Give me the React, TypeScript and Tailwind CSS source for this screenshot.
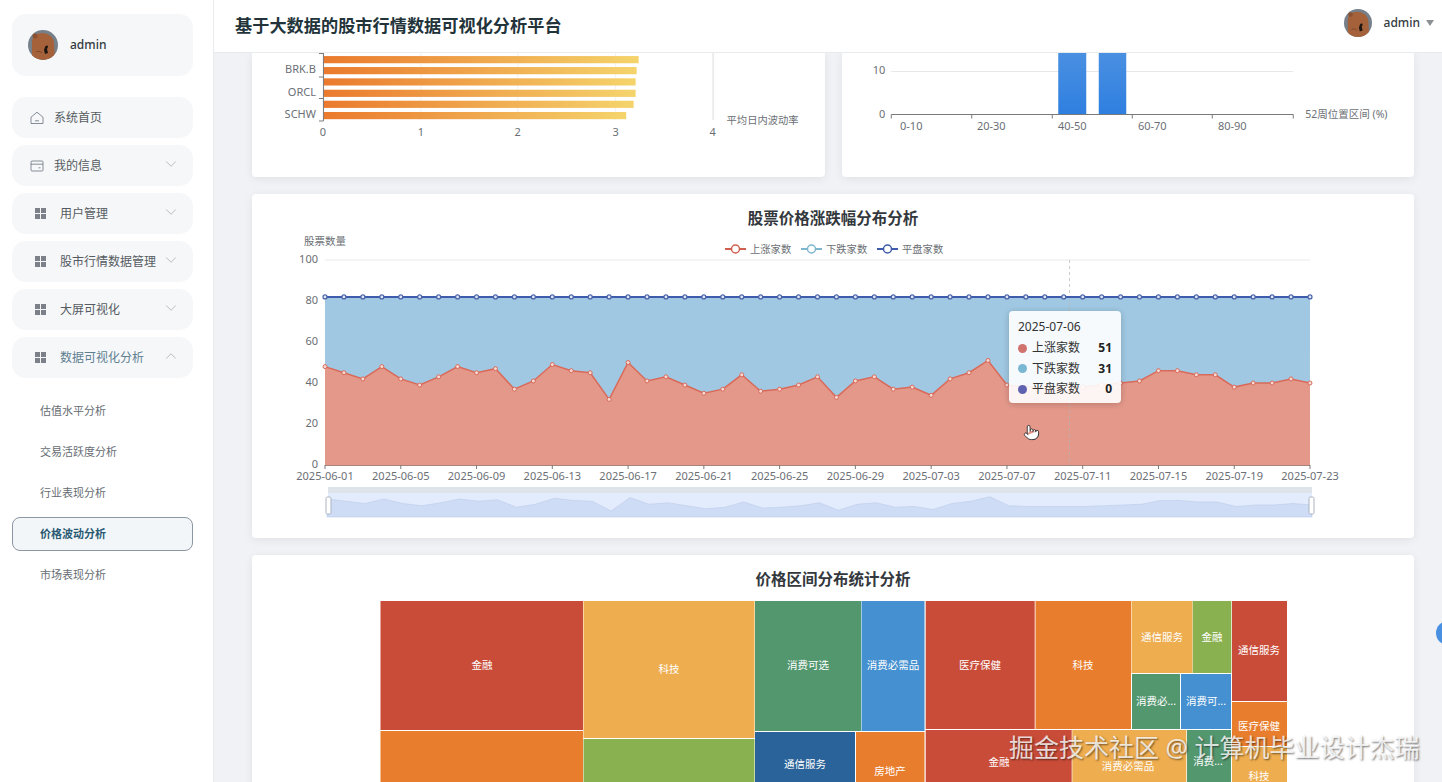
import React from 'react';
import { ChevronDown, ChevronUp, Pointer } from 'lucide-react';

const upCounts = [
  48, 45, 42, 48, 42, 39, 43, 48, 45, 47, 37, 41, 49, 46, 45, 32, 50, 41, 43, 39, 35, 37, 44, 36, 37, 39, 43,
  33, 41, 43, 37, 38, 34, 42, 45, 51, 39, 38, 38, 38, 38, 39, 40, 41, 46, 46, 44, 44, 38, 40, 40, 42, 40,
];
const dateTicks = [
  '2025-06-01', '2025-06-05', '2025-06-09', '2025-06-13', '2025-06-17', '2025-06-21', '2025-06-25',
  '2025-06-29', '2025-07-03', '2025-07-07', '2025-07-11', '2025-07-15', '2025-07-19', '2025-07-23',
];
const volBars = [
  { y: 56, end: 639 },
  { y: 67, end: 637 },
  { y: 78.3, end: 636 },
  { y: 89.7, end: 636 },
  { y: 100.7, end: 634 },
  { y: 112, end: 626.5 },
];
const tiles = [
  { x: 380.5, y: 601, w: 202.5, h: 129, c: '#c94c39', t: '金融', tx: 482, ty: 665 },
  { x: 380.5, y: 731, w: 202.5, h: 60, c: '#e87e2d' },
  { x: 583.5, y: 601, w: 171, h: 137, c: '#eead4f', t: '科技', tx: 669, ty: 669 },
  { x: 583.5, y: 739, w: 171, h: 50, c: '#8ab14f' },
  { x: 755, y: 601, w: 106, h: 130, c: '#53976f', t: '消费可选', tx: 808, ty: 665 },
  { x: 861.5, y: 601, w: 63, h: 130, c: '#4490d0', t: '消费必需品', tx: 893, ty: 665 },
  { x: 755, y: 732, w: 100, h: 58, c: '#2a6399', t: '通信服务', tx: 805, ty: 764 },
  { x: 856, y: 732, w: 68.5, h: 58, c: '#e87e2d', t: '房地产', tx: 890, ty: 771 },
  { x: 925.7, y: 601, w: 109, h: 128, c: '#c94c39', t: '医疗保健', tx: 980, ty: 665 },
  { x: 1035.5, y: 601, w: 95.5, h: 128, c: '#e87e2d', t: '科技', tx: 1083, ty: 665 },
  { x: 1131.5, y: 601, w: 61, h: 72, c: '#eead4f', t: '通信服务', tx: 1162, ty: 637 },
  { x: 1192.8, y: 601, w: 38.5, h: 72, c: '#8ab14f', t: '金融', tx: 1212, ty: 637 },
  { x: 1132, y: 674, w: 48, h: 55, c: '#53976f', t: '消费必...', tx: 1156, ty: 701 },
  { x: 1181, y: 674, w: 50, h: 55, c: '#4490d0', t: '消费可...', tx: 1206, ty: 701 },
  { x: 1232, y: 601, w: 55, h: 100, c: '#c94c39', t: '通信服务', tx: 1259, ty: 650 },
  { x: 1232, y: 702, w: 55, h: 44, c: '#e87e2d', t: '医疗保健', tx: 1259, ty: 726 },
  { x: 1232, y: 747, w: 55, h: 44, c: '#eead4f', t: '科技', tx: 1259, ty: 776 },
  { x: 925.7, y: 730, w: 146, h: 60, c: '#c94c39', t: '金融', tx: 999, ty: 762 },
  { x: 1072.3, y: 730, w: 114, h: 60, c: '#eead4f', t: '消费必需品', tx: 1128, ty: 766 },
  { x: 1187, y: 730, w: 44, h: 60, c: '#53976f', t: '消费...', tx: 1208, ty: 761 },
];

const xAt = (i: number) => 325 + i * 18.942;
const yAt = (v: number) => 465 - v * 2.05;
const upLine = upCounts.map((v, i) => `${xAt(i)},${yAt(v)}`).join(' ');
const miniLine = upCounts.map((v, i) => `${327 + i * 18.94},${499 + (48 - v) * 0.75}`).join(' ');

function Avatar({ size }: { size: string }) {
  return (
    <svg viewBox="0 0 30 30" className={size}>
      <defs>
        <clipPath id="avatar-clip">
          <circle cx="15" cy="15" r="15" />
        </clipPath>
      </defs>
      <g clipPath="url(#avatar-clip)">
        <rect width="30" height="30" fill="#76808a" />
        <path d="M4 30V12c0-6 5-9 10-9s11 3 12 9l1 18z" fill="#a5623a" />
        <circle cx="7" cy="6" r="2.5" fill="#8b5030" />
        <path d="M17 17c1-2 3-2 3 0l-1 2 1 4-3 1-1-4z" fill="#1c1512" />
        <path d="M8 22c2-1 4-1 6 1" stroke="#7a4527" strokeWidth="1" fill="none" />
      </g>
    </svg>
  );
}

function NavItem({ label, icon, open, arrow = true }: { label: string; icon: 'home' | 'wallet' | 'grid'; open?: boolean; arrow?: boolean }) {
  return (
    <div className="h-[41px] rounded-[14px] bg-[#f5f7f9] flex items-center pr-[13px]">
      {icon === 'home' && (
        <svg viewBox="0 0 14 14" className="w-[14px] h-[14px] ml-[18px] mr-[10px] text-[#6b7280]" fill="none" stroke="currentColor" strokeWidth="0.8">
          <path d="M1 6.2 7 1.2l6 5v6.3H1z" />
          <path d="M5 9.8h4" />
        </svg>
      )}
      {icon === 'wallet' && (
        <svg viewBox="0 0 14 14" className="w-[14px] h-[14px] ml-[18px] mr-[10px] text-[#6b7280]" fill="none" stroke="currentColor" strokeWidth="0.8">
          <rect x="1" y="2" width="12" height="10" rx="1" />
          <path d="M1 5.2h12M8.5 8.8h2" />
        </svg>
      )}
      {icon === 'grid' && (
        <div className="ml-[23px] mr-[14px] grid grid-cols-2 gap-[1.5px] w-[11px]">
          <span className="h-[5px] bg-[#7c8189]" />
          <span className="h-[5px] bg-[#7c8189]" />
          <span className="h-[5px] bg-[#7c8189]" />
          <span className="h-[5px] bg-[#7c8189]" />
        </div>
      )}
      <span className={open ? 'text-[12px] text-[#5f7f91]' : 'text-[12px] text-[#555b61]'}>{label}</span>
      {arrow && (
        <span className="ml-auto -mt-[3px] text-[#8f969d]">
          {open ? <ChevronUp size={18} strokeWidth={0.8} /> : <ChevronDown size={18} strokeWidth={0.8} />}
        </span>
      )}
    </div>
  );
}

function Sidebar() {
  const subItems = ['估值水平分析', '交易活跃度分析', '行业表现分析', '价格波动分析', '市场表现分析'];
  return (
    <aside className="w-[214px] shrink-0 bg-white border-r border-[#e9ecef] px-3 pt-[14px]">
      <div className="w-[181px]">
        <div className="h-[62px] rounded-[14px] bg-[#f5f7f9] flex items-center pl-4 gap-3">
          <Avatar size="w-[30px] h-[30px]" />
          <span className="text-[12px] font-medium text-[#333a40]">admin</span>
        </div>
        <nav className="mt-[21px] flex flex-col gap-[7px]">
          <NavItem label="系统首页" icon="home" arrow={false} />
          <NavItem label="我的信息" icon="wallet" />
          <NavItem label="用户管理" icon="grid" />
          <NavItem label="股市行情数据管理" icon="grid" />
          <NavItem label="大屏可视化" icon="grid" />
          <NavItem label="数据可视化分析" icon="grid" open />
        </nav>
        <ul className="mt-[16px] flex flex-col gap-[7px]">
          {subItems.map(item =>
            item === '价格波动分析' ? (
              <li key={item} className="h-[34px] pl-[27px] flex items-center rounded-lg border border-[#8b98a3] bg-[#f3f6f9] text-[11px] font-bold text-[#2a5a73]">
                {item}
              </li>
            ) : (
              <li key={item} className="h-[34px] pl-7 flex items-center text-[11px] text-[#666c72]">
                {item}
              </li>
            )
          )}
        </ul>
      </div>
    </aside>
  );
}

function Header() {
  return (
    <header className="relative z-10 h-[53px] shrink-0 bg-white border-b border-[#e8ebee] flex items-center pl-[21px] pr-[6px]">
      <h1 className="text-[17.2px] font-bold text-[#22343a]">基于大数据的股市行情数据可视化分析平台</h1>
      <div className="ml-auto flex items-center mb-[6px] mr-[2px]">
        <Avatar size="w-[28px] h-[28px]" />
        <span className="ml-3 text-[12px] font-medium text-[#333a40]">admin</span>
        <span className="ml-[6px] w-0 h-0 border-x-[4.5px] border-x-transparent border-t-[6px] border-t-[#8c9196]" />
      </div>
    </header>
  );
}

function VolatilityCard() {
  return (
    <section className="flex-1 h-[125px] bg-white rounded-b shadow-[0_2px_10px_rgba(0,0,0,0.07)]">
      <svg viewBox="252 52 573 125" className="w-full h-full block text-[11px]" fill="#6b6f75">
        <defs>
          <linearGradient id="bar-fill" x1="0" x2="1" y1="0" y2="0">
            <stop offset="0" stopColor="#ea7a2e" />
            <stop offset="1" stopColor="#f5d46c" />
          </linearGradient>
        </defs>
        {[421, 518, 616].map(x => (
          <line key={x} x1={x} x2={x} y1={53} y2={120} stroke="#f1f1f1" />
        ))}
        <line x1={713.5} x2={713.5} y1={53} y2={120} stroke="#dcdcdc" />
        {volBars.map(b => (
          <rect key={b.y} x={323.5} y={b.y} width={b.end - 323.5} height={7.2} fill="url(#bar-fill)" />
        ))}
        <path d="M323.5 53v68M319 53.5h4.5M319 77h4.5M319 98.5h4.5M319 121h4.5" stroke="#7a7a7a" fill="none" />
        {[['BRK.B', 73], ['ORCL', 96], ['SCHW', 118]].map(([t, y]) => (
          <text key={t} x={316} y={y} textAnchor="end">{t}</text>
        ))}
        {[[323, '0'], [421, '1'], [518, '2'], [616, '3'], [713, '4']].map(([x, t]) => (
          <text key={t} x={x} y={136} textAnchor="middle">{t}</text>
        ))}
        <text x={727} y={124} className="text-[10.3px]">平均日内波动率</text>
      </svg>
    </section>
  );
}

function PositionCard() {
  return (
    <section className="flex-1 h-[125px] bg-white rounded-b shadow-[0_2px_10px_rgba(0,0,0,0.07)]">
      <svg viewBox="842 52 572 125" className="w-full h-full block text-[11px]" fill="#6b6f75">
        <defs>
          <linearGradient id="col-fill" x1="0" x2="0" y1="0" y2="1">
            <stop offset="0" stopColor="#4a90e2" />
            <stop offset="1" stopColor="#2f7fe0" />
          </linearGradient>
        </defs>
        <line x1={891} x2={1293} y1={71.5} y2={71.5} stroke="#e8e8e8" />
        <rect x={1058} y={52} width={28} height={62} fill="url(#col-fill)" />
        <rect x={1098.5} y={52} width={27.5} height={62} fill="url(#col-fill)" />
        <path d="M891 114.5h402M891 114.5v4M971.5 114.5v4M1052 114.5v4M1132 114.5v4M1212 114.5v4M1293 114.5v4" stroke="#7a7a7a" fill="none" />
        <text x={885} y={74} textAnchor="end">10</text>
        <text x={885} y={118} textAnchor="end">0</text>
        {[[911, '0-10'], [991, '20-30'], [1072, '40-50'], [1152, '60-70'], [1232, '80-90']].map(([x, t]) => (
          <text key={t} x={x} y={130} textAnchor="middle">{t}</text>
        ))}
        <text x={1305} y={118} className="text-[10.5px]">52周位置区间 (%)</text>
      </svg>
    </section>
  );
}

function LegendMark({ x, color, label }: { x: number; color: string; label: string }) {
  return (
    <g>
      <line x1={x} x2={x + 21} y1={249} y2={249} stroke={color} strokeWidth={2} />
      <circle cx={x + 10.5} cy={249} r={4} fill="#fff" stroke={color} strokeWidth={1.5} />
      <text x={x + 25} y={253} className="text-[10.3px]">{label}</text>
    </g>
  );
}

function RiseFallCard() {
  return (
    <section className="relative h-[344px] bg-white rounded shadow-[0_2px_10px_rgba(0,0,0,0.07)]">
      <h2 className="pt-[12px] h-[38px] text-center text-[15.5px] leading-[24px] font-bold text-[#33383d]">股票价格涨跌幅分布分析</h2>
      <svg viewBox="252 232 1162 306" className="w-full h-[306px] block text-[11px]" fill="#6b6f75">
        <text x={304} y={245} className="text-[10.5px]">股票数量</text>
        <LegendMark x={725} color="#d0604f" label="上涨家数" />
        <LegendMark x={801} color="#7db6cf" label="下跌家数" />
        <LegendMark x={877} color="#3f5bab" label="平盘家数" />
        {[100, 80, 60, 40, 20, 0].map(v => (
          <g key={v}>
            <line x1={325} x2={1310} y1={yAt(v)} y2={yAt(v)} stroke="#e9e9e9" />
            <text x={318} y={yAt(v) + 3} textAnchor="end">{v}</text>
          </g>
        ))}
        <polygon points={`325,${yAt(82)} 1310,${yAt(82)} ${upLine.split(' ').reverse().join(' ')}`} fill="#a0c8e2" />
        <polygon points={`325,465 ${upLine} 1310,465`} fill="#e3988a" />
        <line x1={1069.5} x2={1069.5} y1={260} y2={465} stroke="#b5b5b5" strokeDasharray="3 3" strokeOpacity={0.7} />
        <polyline points={upLine} fill="none" stroke="#d96a5a" strokeWidth={1.5} />
        {upCounts.map((v, i) => (
          <circle key={i} cx={xAt(i)} cy={yAt(v)} r={2} fill="#f6d9d3" stroke="#d96a5a" />
        ))}
        <line x1={325} x2={1310} y1={yAt(82)} y2={yAt(82)} stroke="#3f5bab" strokeWidth={2} />
        {upCounts.map((_, i) => (
          <circle key={i} cx={xAt(i)} cy={yAt(82)} r={2} fill="#dfe8f5" stroke="#4a62a8" strokeWidth={1.2} />
        ))}
        <line x1={325} x2={1310} y1={465.5} y2={465.5} stroke="#a8837c" />
        {dateTicks.map((d, i) => (
          <g key={d}>
            <line x1={325 + i * 75.77} x2={325 + i * 75.77} y1={465} y2={469} stroke="#7a7a7a" />
            <text x={325 + i * 75.77} y={480} textAnchor="middle">{d}</text>
          </g>
        ))}
        <rect x={328} y={487} width={984} height={6} fill="#dfe4ea" />
        <rect x={328} y={493} width={984} height={24} fill="#e3ecfc" />
        <polygon points={`327,517 ${miniLine} 1312,517`} fill="#cfdcf6" stroke="#bccbea" strokeWidth={0.6} />
        <rect x={326} y={497} width={5} height={17} rx={1.5} fill="#fff" stroke="#a9b3bf" />
        <rect x={1309} y={497} width={5} height={17} rx={1.5} fill="#fff" stroke="#a9b3bf" />
      </svg>
      <div className="absolute left-[757px] top-[117px] w-[112px] h-[92px] rounded bg-white/90 shadow-[0_1px_6px_rgba(0,0,0,0.2)] px-[9px] pt-[6px] text-[12px] text-[#333]">
        <div className="h-[20px] leading-[20px] mb-[1px]">2025-07-06</div>
        {[
          ['bg-[#d0736f]', '上涨家数', '51'],
          ['bg-[#7ab7d2]', '下跌家数', '31'],
          ['bg-[#5f62b0]', '平盘家数', '0'],
        ].map(([dot, name, val]) => (
          <div key={name} className="h-[20.5px] flex items-center">
            <span className={`w-[9px] h-[9px] rounded-full mr-[5px] ${dot}`} />
            <span>{name}</span>
            <span className="ml-auto font-bold text-[#222]">{val}</span>
          </div>
        ))}
      </div>
      <Pointer size={17} strokeWidth={1.2} className="absolute left-[771px] top-[230px] text-[#222] fill-white" />
    </section>
  );
}

function PriceRangeCard() {
  return (
    <section className="h-[260px] bg-white rounded shadow-[0_2px_10px_rgba(0,0,0,0.07)]">
      <h2 className="pt-[12px] h-[46px] text-center text-[15.5px] leading-[24px] font-bold text-[#33383d]">价格区间分布统计分析</h2>
      <svg viewBox="252 601 1162 214" className="w-full h-[214px] block text-[10.5px]">
        {tiles.map((n, i) => (
          <g key={i}>
            <rect x={n.x} y={n.y} width={n.w} height={n.h} fill={n.c} />
            {n.t && (
              <text x={n.tx} y={(n.ty ?? 0) + 4} textAnchor="middle" fill="#fff">
                {n.t}
              </text>
            )}
          </g>
        ))}
      </svg>
    </section>
  );
}

export default function App() {
  return (
    <div className="relative flex h-[782px] w-[1442px] overflow-hidden bg-[#f0f2f5] [font-family:'Noto_Sans','Noto_Sans_CJK_SC',sans-serif]">
      <Sidebar />
      <div className="flex-1 min-w-0 flex flex-col">
        <Header />
        <main className="flex-1 overflow-hidden pl-[38px] pr-[28px] flex flex-col gap-[17px]">
          <div className="flex gap-[17px] -mt-[1px]">
            <VolatilityCard />
            <PositionCard />
          </div>
          <RiseFallCard />
          <PriceRangeCard />
        </main>
      </div>
      <div className="absolute right-[-18px] top-[621px] w-6 h-6 rounded-full bg-[#4a90e2]" />
      <div className="absolute left-[1009px] top-[730px] text-[25px] leading-[34px] whitespace-nowrap text-white/80 [text-shadow:1px_1px_2px_rgba(0,0,0,0.55)]">
        掘金技术社区 @ 计算机毕业设计杰瑞
      </div>
    </div>
  );
}
